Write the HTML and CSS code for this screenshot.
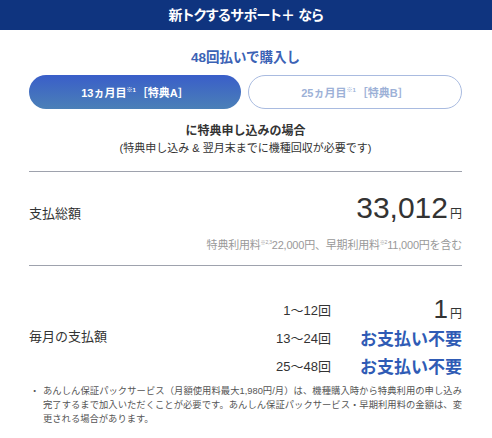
FILE: index.html
```html
<!DOCTYPE html>
<html lang="ja">
<head>
<meta charset="utf-8">
<link rel="stylesheet" href="styles.css">
</head>
<body>
<header class="banner">新トクするサポート＋ なら</header>
<main class="content">
  <p class="lead">48回払いで購入し</p>
  <div class="tabs">
    <button class="tab tab-active">13ヵ月目<sup>※1</sup>［特典A］</button>
    <button class="tab">25ヵ月目<sup>※1</sup>［特典B］</button>
  </div>
  <div class="cond">
    <p class="cond-title">に特典申し込みの場合</p>
    <p class="cond-sub">(特典申し込み &amp; 翌月末までに機種回収が必要です)</p>
  </div>
  <hr class="rule">
  <section class="total">
    <div class="total-row">
      <span class="label">支払総額</span>
      <span class="amount"><span class="num">33,012</span><span class="yen">円</span></span>
    </div>
    <p class="total-note">特典利用料<sup>※2,3</sup>22,000円、早期利用料<sup>※2</sup>11,000円を含む</p>
  </section>
  <hr class="rule">
  <section class="monthly">
    <span class="label monthly-label">毎月の支払額</span>
    <span class="range r1">1～12回</span>
    <span class="value r1"><span class="num-s">1</span><span class="yen">円</span></span>
    <span class="range r2">13～24回</span>
    <span class="value r2 free">お支払い不要</span>
    <span class="range r3">25～48回</span>
    <span class="value r3 free">お支払い不要</span>
  </section>
  <ul class="notes">
    <li>あんしん保証パックサービス（月額使用料最大1,980円/月）は、機種購入時から特典利用の申し込み完了するまで加入いただくことが必要です。あんしん保証パックサービス・早期利用料の金額は、変更される場合があります。</li>
  </ul>
</main>
</body>
</html>
```

FILE: styles.css
```css
* { box-sizing: border-box; }
html, body { margin: 0; padding: 0; background: #fff; }
body {
  font-family: "Liberation Sans", "Noto Sans CJK JP", sans-serif;
  color: #333;
  width: 492px;
}
p { margin: 0; }

.banner {
  height: 30px;
  background: #0f347f;
  color: #fff;
  font-weight: bold;
  font-size: 14px;
  line-height: 30px;
  text-align: center;
  font-feature-settings: "palt";
  letter-spacing: -0.4px;
}

.content {
  padding: 0 30px 0 29px;
}

.lead {
  margin-top: 18px;
  text-align: center;
  color: #3b62b5;
  font-size: 13.5px;
  font-weight: bold;
  line-height: 20px;
}

.tabs {
  display: flex;
  gap: 7px;
  margin-top: 7px;
}
.tab {
  flex: 1;
  height: 34px;
  border-radius: 17px;
  border: 1px solid #a9bbe0;
  background: #fff;
  color: #9db1d7;
  font-family: inherit;
  font-size: 11px;
  font-weight: bold;
  padding: 0;
}
.tab sup {
  font-size: 6px;
  vertical-align: 5px;
  margin-right: 1px;
}
.tab-active {
  border: none;
  background: linear-gradient(#3a5ec9, #4b80b7);
  color: #fff;
}

.cond {
  margin-top: 13px;
  text-align: center;
}
.cond-title {
  font-size: 12px;
  font-weight: bold;
  line-height: 18px;
}
.cond-sub {
  font-size: 11px;
  line-height: 17px;
}

.rule {
  border: none;
  border-top: 1px solid #9ea2ad;
  margin: 14px 0 0;
  height: 0;
}

.total { padding-top: 20px; }
.total-row {
  display: flex;
  justify-content: space-between;
  align-items: baseline;
}
.label {
  font-size: 13px;
}
.amount { line-height: 32px; }
.num {
  font-size: 30px;
}
.yen {
  font-size: 12px;
  margin-left: 2px;
}
.total-note {
  text-align: right;
  color: #999;
  font-size: 11px;
  line-height: 16px;
  margin-top: 4px;
  letter-spacing: -0.2px;
}
.total-note sup {
  font-size: 5px;
  vertical-align: 5px;
}
.total + .rule { margin-top: 12px; }

.monthly {
  display: grid;
  grid-template-columns: 1fr auto 131px;
  grid-template-rows: repeat(3, 28px);
  margin-top: 29px;
  align-items: center;
}
.monthly-label {
  grid-column: 1;
  grid-row: 1 / 4;
  padding-bottom: 3px;
}
.range {
  grid-column: 2;
  text-align: right;
  font-size: 13px;
}
.value {
  grid-column: 3;
  text-align: right;
}
.r1 { grid-row: 1; }
.r2 { grid-row: 2; }
.r3 { grid-row: 3; }
.num-s {
  font-size: 26px;
  line-height: 28px;
}
.free {
  color: #2f5bb5;
  font-weight: bold;
  font-size: 17px;
}

.notes {
  list-style: none;
  margin: 5px 0 0;
  padding: 0 0 0 14px;
  font-size: 9.3px;
  line-height: 14px;
  color: #555;
  text-align: justify;
}
.notes li { position: relative; }
.notes li::before {
  content: "・";
  position: absolute;
  left: -13px;
}
```
